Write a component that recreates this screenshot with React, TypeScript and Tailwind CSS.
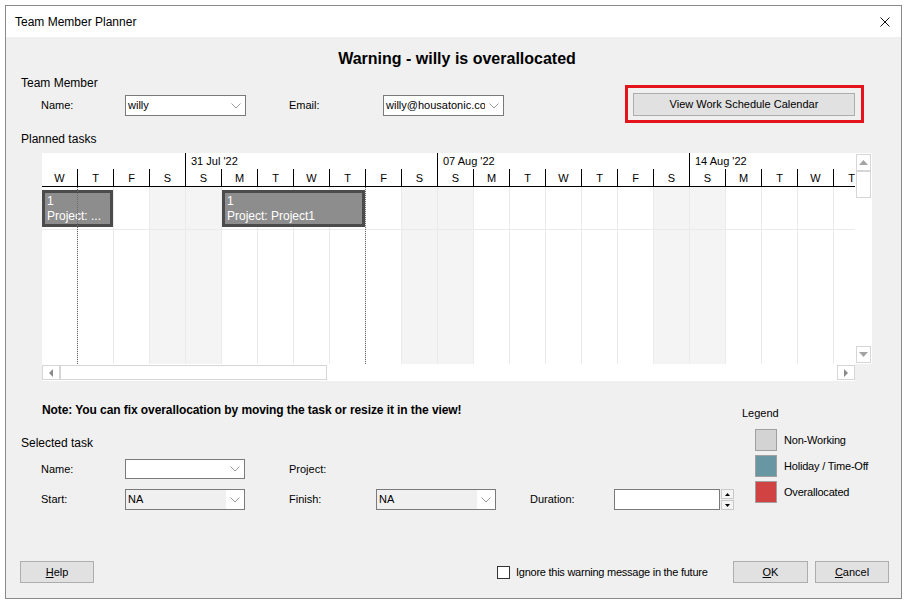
import React from 'react';

const DAYS = ['W', 'T', 'F', 'S', 'S', 'M', 'T', 'W', 'T', 'F', 'S', 'S', 'M', 'T', 'W', 'T', 'F', 'S', 'S', 'M', 'T', 'W', 'T'];
const DATES: Record<number, string> = { 4: "31 Jul '22", 11: "07 Aug '22", 18: "14 Aug '22" };
const SAT = [3, 10, 17];
const WEEKEND = [3, 4, 10, 11, 17, 18];

function Chevron() {
  return (
    <svg width="10" height="6" viewBox="0 0 10 6" className="block">
      <polyline points="0.5,0.5 5,5 9.5,0.5" fill="none" stroke="#9a9a9a" strokeWidth="1" />
    </svg>
  );
}

function Combo({ className, value = '', disabled = false }: { className: string; value?: string; disabled?: boolean }) {
  return (
    <div className={`flex border border-[#7a7a7a] ${disabled ? 'bg-[#f0f0f0]' : 'bg-white'} ${className}`}>
      <div className="flex min-w-0 flex-1 items-center overflow-hidden whitespace-nowrap pl-[2px] text-[11px] leading-[13px]">{value}</div>
      <div className="flex w-[18px] shrink-0 items-center justify-center bg-white">
        <Chevron />
      </div>
    </div>
  );
}

function Btn({ className, children }: { className: string; children: React.ReactNode }) {
  return (
    <div className={`flex items-center justify-center border border-[#adadad] bg-[#e1e1e1] text-[11px] ${className}`}>{children}</div>
  );
}

function Tri({ dir, color = '#a3a3a3' }: { dir: 'up' | 'down' | 'left' | 'right'; color?: string }) {
  if (dir === 'up')
    return (
      <svg width="9" height="5" viewBox="0 0 9 5" className="block">
        <polygon points="0,5 4.5,0 9,5" fill={color} />
      </svg>
    );
  if (dir === 'down')
    return (
      <svg width="9" height="5" viewBox="0 0 9 5" className="block">
        <polygon points="0,0 4.5,5 9,0" fill={color} />
      </svg>
    );
  if (dir === 'left')
    return (
      <svg width="4" height="8" viewBox="0 0 4 8" className="block">
        <polygon points="4,0 0,4 4,8" fill={color} />
      </svg>
    );
  return (
    <svg width="4" height="8" viewBox="0 0 4 8" className="block">
      <polygon points="0,0 4,4 0,8" fill={color} />
    </svg>
  );
}

function Chart() {
  return (
    <div className="ml-[36px] mt-[6px] flex h-[228px] w-[830px] flex-col">
      <div className="flex h-[211px]">
        <div className="flex h-full w-[813px] flex-col overflow-hidden bg-white">
          <div className="flex h-[34px] shrink-0 border-b border-black">
            {DAYS.map((d, i) => (
              <div key={i} className="flex w-[36px] shrink-0 flex-col">
                <div
                  className={`h-[16px] whitespace-nowrap pl-[5px] text-[11px] leading-[16px] ${SAT.includes(i) ? 'border-r border-black' : ''}`}
                >
                  {DATES[i] ?? ''}
                </div>
                <div className="h-[17px] border-r border-black pt-[1px] text-center text-[11px] leading-[16px]">{d}</div>
              </div>
            ))}
          </div>
          <div className="relative flex flex-1">
            {DAYS.map((_, i) => (
              <div
                key={i}
                className={`h-full w-[36px] shrink-0 border-r border-[#ebebeb] ${WEEKEND.includes(i) ? 'bg-[#f4f4f4]' : 'bg-white'}`}
              >
                <div className="h-[43px] border-b border-[#ebebeb]" />
              </div>
            ))}
            <div className="absolute left-0 top-[3px] h-[37px] w-[71px] overflow-hidden border-[3px] border-[#4b4b4b] bg-[#8d8d8d] pl-[2px] pt-[1px] text-[12px] leading-[15px] text-white">
              <div>1</div>
              <div className="whitespace-nowrap">Project: ...</div>
            </div>
            <div className="absolute left-[180px] top-[3px] h-[37px] w-[143px] overflow-hidden border-[3px] border-[#4b4b4b] bg-[#8d8d8d] pl-[2px] pt-[1px] text-[12px] leading-[15px] text-white">
              <div>1</div>
              <div className="whitespace-nowrap">Project: Project1</div>
            </div>
            <div className="absolute bottom-0 left-[35px] top-0 border-l border-dotted border-[#6a6a6a]" />
            <div className="absolute bottom-0 left-[323px] top-0 border-l border-dotted border-[#6a6a6a]" />
          </div>
        </div>
        <div className="flex h-full w-[17px] flex-col bg-white px-[1px] py-[1px]">
          <div className="flex h-[17px] items-center justify-center border border-[#d6d6d6]">
            <Tri dir="up" />
          </div>
          <div className="h-[27px] border border-[#d6d6d6]" />
          <div className="flex-1" />
          <div className="flex h-[17px] items-center justify-center border border-[#d6d6d6]">
            <Tri dir="down" />
          </div>
        </div>
      </div>
      <div className="flex h-[17px]">
        <div className="flex h-full w-[813px] items-center bg-white">
          <div className="flex h-[15px] w-[18px] items-center justify-center border border-[#d6d6d6]">
            <Tri dir="left" color="#8a8a8a" />
          </div>
          <div className="h-[15px] w-[267px] border border-[#d6d6d6]" />
          <div className="flex-1" />
          <div className="flex h-[15px] w-[18px] items-center justify-center border border-[#d6d6d6]">
            <Tri dir="right" color="#8a8a8a" />
          </div>
        </div>
        <div className="w-[17px] bg-[#f0f0f0]" />
      </div>
    </div>
  );
}

export default function App() {
  return (
    <div className="h-[603px] w-[908px] bg-white pl-[5px] pt-[5px] font-['Liberation_Sans',Arial,sans-serif] text-black">
      <div className="flex h-[594px] w-[897px] flex-col border border-[#8a8a8a]">
        {/* Title bar */}
        <div className="flex h-[31px] shrink-0 items-center justify-between bg-white pl-[9px] pr-[11px]">
          <span className="text-[12px]">Team Member Planner</span>
          <svg width="10" height="10" viewBox="0 0 10 10" className="block">
            <line x1="0.5" y1="0.5" x2="9.5" y2="9.5" stroke="#111" strokeWidth="1" />
            <line x1="9.5" y1="0.5" x2="0.5" y2="9.5" stroke="#111" strokeWidth="1" />
          </svg>
        </div>

        {/* Body */}
        <div className="flex flex-1 flex-col bg-[#f0f0f0]">
          <div className="mt-[12px] h-[20px] pl-[7px] text-center text-[16px] font-bold leading-[20px]">
            Warning - willy is overallocated
          </div>

          <div className="mt-[6px] flex">
            <div className="ml-[15px] flex w-[483px] flex-col">
              <div className="mt-[1px] h-[15px] text-[12px] leading-[15px]">Team Member</div>
              <div className="mt-[4px] flex h-[21px] items-center pl-[20px]">
                <div className="w-[84px] text-[11px]">Name:</div>
                <Combo className="h-[21px] w-[121px]" value="willy" />
                <div className="ml-[43px] w-[94px] text-[11px]">Email:</div>
                <Combo className="h-[21px] w-[121px]" value="willy@housatonic.co" />
              </div>
            </div>
            <div className="ml-[121px] mt-[10px] h-[38px] w-[239px] border-[3px] border-[#e3141c] pb-[3px] pl-[5px] pr-[4px] pt-[5px]">
              <Btn className="h-[23px] w-[222px]">View Work Schedule Calendar</Btn>
            </div>
          </div>

          <div className="ml-[15px] mt-[9px] h-[15px] text-[12px] leading-[15px]">Planned tasks</div>

          <Chart />

          <div className="flex">
            <div className="ml-[15px] flex w-[721px] flex-col">
              <div className="mt-[22px] h-[15px] pl-[21px] text-[12px] font-bold leading-[15px] tracking-[-0.08px]">
                Note: You can fix overallocation by moving the task or resize it in the view!
              </div>
              <div className="mt-[18px] h-[15px] text-[12px] leading-[15px]">Selected task</div>
              <div className="mt-[8px] flex h-[20px] items-center pl-[20px]">
                <div className="w-[84px] text-[11px]">Name:</div>
                <Combo className="h-[20px] w-[120px]" />
                <div className="ml-[44px] text-[11px]">Project:</div>
              </div>
              <div className="mt-[10px] flex h-[21px] items-center pl-[20px]">
                <div className="w-[84px] text-[11px]">Start:</div>
                <Combo className="h-[21px] w-[120px]" value="NA" disabled />
                <div className="ml-[44px] w-[87px] text-[11px]">Finish:</div>
                <Combo className="h-[21px] w-[120px]" value="NA" disabled />
                <div className="ml-[34px] w-[84px] text-[11px]">Duration:</div>
                <div className="h-[21px] w-[106px] border border-[#7a7a7a] bg-white" />
                <div className="ml-[1px] flex h-[21px] w-[13px] flex-col justify-between">
                  <div className="flex h-[10px] items-center justify-center border border-[#c8c8c8] bg-[#f4f4f4]">
                    <svg width="5" height="3" viewBox="0 0 5 3" className="block">
                      <polygon points="0,3 2.5,0 5,3" fill="#000" />
                    </svg>
                  </div>
                  <div className="flex h-[10px] items-center justify-center border border-[#c8c8c8] bg-[#f4f4f4]">
                    <svg width="5" height="3" viewBox="0 0 5 3" className="block">
                      <polygon points="0,0 2.5,3 5,0" fill="#000" />
                    </svg>
                  </div>
                </div>
              </div>
            </div>

            <div className="flex flex-col">
              <div className="mt-[25px] h-[15px] text-[11px] leading-[15px]">Legend</div>
              <div className="mt-[8px] flex flex-col gap-[4px] pl-[13px]">
                <div className="flex items-center">
                  <div className="h-[22px] w-[22px] border border-[#a0a0a0] bg-[#d3d3d3]" />
                  <div className="ml-[7px] text-[11px] tracking-[-0.2px]">Non-Working</div>
                </div>
                <div className="flex items-center">
                  <div className="h-[22px] w-[22px] border border-[#a0a0a0] bg-[#6896a3]" />
                  <div className="ml-[7px] text-[11px] tracking-[-0.2px]">Holiday / Time-Off</div>
                </div>
                <div className="flex items-center">
                  <div className="h-[22px] w-[22px] border border-[#a0a0a0] bg-[#d14343]" />
                  <div className="ml-[7px] text-[11px] tracking-[-0.2px]">Overallocated</div>
                </div>
              </div>
            </div>
          </div>

          <div className="mb-[15px] mt-auto flex h-[22px] items-center pr-[12px]">
            <Btn className="ml-[14px] h-[22px] w-[74px]">
              <span className="underline">H</span>elp
            </Btn>
            <div className="ml-[403px] h-[13px] w-[13px] border border-[#333] bg-white" />
            <div className="ml-[6px] text-[11px] tracking-[-0.25px]">Ignore this warning message in the future</div>
            <Btn className="ml-auto h-[22px] w-[75px]">
              <span className="underline">O</span>K
            </Btn>
            <Btn className="ml-[7px] h-[22px] w-[74px]">
              <span className="underline">C</span>ancel
            </Btn>
          </div>
        </div>
      </div>
    </div>
  );
}
